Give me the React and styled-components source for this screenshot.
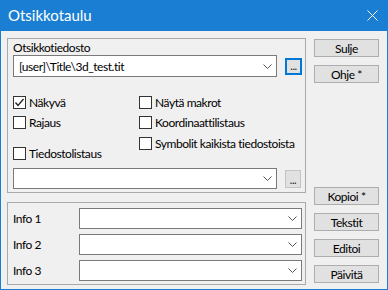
import React from 'react';
import styled, { createGlobalStyle } from 'styled-components';

const Global = createGlobalStyle`
    html, body { margin:0; padding:0; background:#fff; }
    body { font-family:Lato, "Liberation Sans", sans-serif; font-size:12px; color:#000; letter-spacing:-0.45px; }
`;

const Win = styled.div`
    width:388px; height:290px; box-sizing:border-box;
    border:1px solid #1a7fd3; border-top:0;
    background:#f0f0f0;
    display:flex; flex-direction:column;
`;

const TitleBar = styled.div`
    height:31px; flex:none;
    margin:0 -1px;
    background:#1a7fd3; color:#fff;
    display:flex; align-items:center; justify-content:space-between;
    padding:0 10px 0 8px;
    font-size:15px; letter-spacing:0;
    span { margin-top:-2px; }
`;

const Body = styled.div`
    flex:1;
    display:flex; gap:8px;
    padding:0 8px 0 6px;
`;

const LeftCol = styled.div`
    width:299px;
    padding-top:7px;
    display:flex; flex-direction:column; gap:9px;
`;

const Group = styled.div`
    box-sizing:border-box;
    height:${p => p.$h}px;
    border:1px solid #a9a9a9;
    padding:${p => p.$pad};
`;

const Label = styled.div`
    line-height:15px;
    height:15px;
`;

const Row = styled.div`
    display:flex; align-items:center; gap:${p => p.$gap || 8}px;
    margin-top:${p => p.$mt || 0}px;
`;

const Combo = styled.div`
    box-sizing:border-box;
    width:${p => p.$w}px; height:${p => p.$h || 21}px;
    background:#fff;
    border:1px solid #7a7a7a;
    display:flex; align-items:center; justify-content:space-between;
    padding:0 4px 0 5px;
    white-space:nowrap;
`;

const Dots = styled.div`
    box-sizing:border-box;
    width:${p => p.$focus ? 17 : 16}px; height:${p => p.$focus ? 17 : 18}px;
    background:#e1e1e1;
    border:${p => p.$focus ? '2px solid #0078d7' : '1px solid #c4c4c4'};
    display:flex; align-items:flex-end; justify-content:center;
    font-size:11px; line-height:11px; padding-bottom:2px;
    letter-spacing:-0.5px;
    color:#222;
`;

const Checks = styled.div`
    display:flex;
    margin-top:18px;
`;

const CheckCol = styled.div`
    width:${p => p.$w}px;
    display:flex; flex-direction:column;
`;

const Check = styled.label`
    display:flex; align-items:center; gap:3px;
    height:15px; line-height:15px;
    margin-top:${p => p.$mt}px;
    white-space:nowrap;
`;

const Box = styled.span`
    box-sizing:border-box;
    width:13px; height:13px; flex:none;
    border:1px solid #333; background:#fff;
    display:flex; align-items:center; justify-content:center;
`;

const InfoRow = styled.div`
    display:flex; align-items:center;
    margin-top:${p => p.$mt}px;
`;

const InfoLabel = styled.div`
    width:66px;
`;

const RightCol = styled.div`
    width:65px;
    display:flex; flex-direction:column;
    padding-top:8px;
`;

const Btn = styled.div`
    box-sizing:border-box;
    height:18px;
    margin-top:${p => p.$mt || 0}px;
    background:#e1e1e1; border:1px solid #adadad;
    display:flex; align-items:center; justify-content:center;
    white-space:nowrap;
`;

const Chevron = () => (
    <svg width="9" height="5" viewBox="0 0 9 5">
        <polyline points="0.5,0.5 4.5,4.5 8.5,0.5" fill="none" stroke="#555" strokeWidth="1" />
    </svg>
);

const CheckBox = ({ checked, children, mt = 5 }) => (
    <Check $mt={mt}>
        <Box>
            {checked && (
                <svg width="11" height="11" viewBox="0 0 11 11">
                    <polyline points="1.5,5.5 4,8.5 9.5,2" fill="none" stroke="#222" strokeWidth="1.3" />
                </svg>
            )}
        </Box>
        {children}
    </Check>
);

export default function App() {
    return (
        <>
            <Global />
            <Win>
                <TitleBar>
                    <span>Otsikkotaulu</span>
                    <svg width="11" height="11" viewBox="0 0 11 11">
                        <path d="M0.5 0.5 L10.5 10.5 M10.5 0.5 L0.5 10.5" stroke="#fff" strokeWidth="1" />
                    </svg>
                </TitleBar>
                <Body>
                    <LeftCol>
                        <Group $h={155} $pad="1px 0 0 5px">
                            <Label>Otsikkotiedosto</Label>
                            <Row>
                                <Combo $w={264} $h={22}>
                                    <span>[user]\Title\3d_test.tit</span>
                                    <Chevron />
                                </Combo>
                                <Dots $focus>...</Dots>
                            </Row>
                            <Checks>
                                <CheckCol $w={126}>
                                    <CheckBox checked mt={0}>Näkyvä</CheckBox>
                                    <CheckBox>Rajaus</CheckBox>
                                    <CheckBox mt={16}>Tiedostolistaus</CheckBox>
                                </CheckCol>
                                <CheckCol $w={160}>
                                    <CheckBox mt={0}>Näytä makrot</CheckBox>
                                    <CheckBox>Koordinaattilistaus</CheckBox>
                                    <CheckBox mt={6}>Symbolit kaikista tiedostoista</CheckBox>
                                </CheckCol>
                            </Checks>
                            <Row $mt={7}>
                                <Combo $w={264}>
                                    <span />
                                    <Chevron />
                                </Combo>
                                <Dots>...</Dots>
                            </Row>
                        </Group>
                        <Group $h={83} $pad="5px 0 0 5px">
                            {['Info 1', 'Info 2', 'Info 3'].map((t, i) => (
                                <InfoRow key={t} $mt={i ? 5 : 0}>
                                    <InfoLabel>{t}</InfoLabel>
                                    <Combo $w={223}>
                                        <span />
                                        <Chevron />
                                    </Combo>
                                </InfoRow>
                            ))}
                        </Group>
                    </LeftCol>
                    <RightCol>
                        <Btn>Sulje</Btn>
                        <Btn $mt={8}>Ohje *</Btn>
                        <Btn $mt={104}>Kopioi *</Btn>
                        <Btn $mt={8}>Tekstit</Btn>
                        <Btn $mt={8}>Editoi</Btn>
                        <Btn $mt={8}>Päivitä</Btn>
                    </RightCol>
                </Body>
            </Win>
        </>
    );
}
